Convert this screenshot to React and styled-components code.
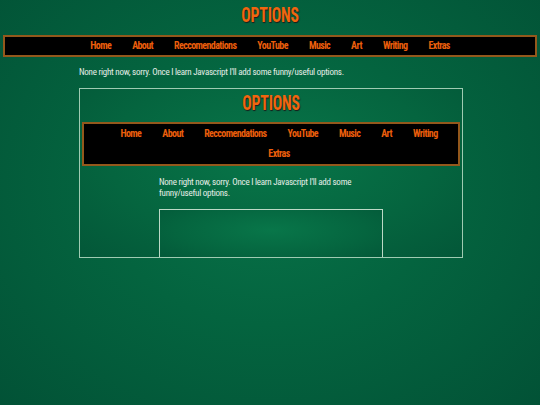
import React from "react";
import styled, { createGlobalStyle } from "styled-components";

const GlobalStyle = createGlobalStyle`
  html, body {
    margin: 0;
    padding: 0;
  }
  body {
    min-height: 100vh;
    background: radial-gradient(ellipse at 50% 45%, #087349 0%, #04643f 45%, #025236 100%);
    font-family: Roboto, "Open Sans", "DejaVu Sans Condensed", sans-serif;
    font-stretch: condensed;
    color: #e8efe9;
  }
`;

const links = ["Home", "About", "Reccomendations", "YouTube", "Music", "Art", "Writing", "Extras"];

const Wrapper = styled.div`
  display: flex;
  flex-direction: column;
  padding-top: ${(p) => (p.inner ? "3px" : "4px")};
`;

const Title = styled.h1`
  margin: 0;
  height: 22px;
  line-height: 22px;
  text-align: center;
  font-size: 21px;
  font-weight: bold;
  letter-spacing: -0.3px;
  color: #f0660f;
  text-shadow: 1px 1px 1px #1a1a1a;
  transform: scaleX(0.75);
`;

const Nav = styled.ul`
  list-style: none;
  margin: ${(p) => (p.inner ? "8px 2px 0" : "9px 3px 0")};
  padding: ${(p) => (p.inner ? "0 0 0 16px" : "0")};
  background: #000;
  border: 2px solid #93581c;
  display: flex;
  flex-wrap: wrap;
  justify-content: center;
  align-items: center;
  align-content: center;
`;

const NavItem = styled.li`
  padding: 0 10.5px;
  height: ${(p) => (p.inner ? "20px" : "18px")};
  line-height: ${(p) => (p.inner ? "20px" : "18px")};
  font-size: 10px;
  font-weight: bold;
  letter-spacing: -0.6px;
  color: #ec5f0c;
`;

const Content = styled.div`
  margin-left: 79px;
  width: ${(p) => (p.inner ? "224px" : "384px")};
  padding-top: ${(p) => (p.inner ? "11px" : "10px")};
`;

const Text = styled.p`
  margin: 0;
  font-size: 9px;
  line-height: 11px;
  letter-spacing: -0.25px;
  color: #e6eee8;
`;

const Frame = styled.div`
  margin-top: 10px;
  height: ${(p) => (p.inner ? "50px" : "168px")};
  border: 1px solid ${(p) => (p.inner ? "#bcd9c6" : "#9fcbb2")};
  border-bottom: ${(p) => (p.inner ? "none" : undefined)};
  overflow: hidden;
  background: radial-gradient(ellipse at 50% 40%, #087649 0%, #05653f 60%, #035738 100%);
`;

function Page({ inner, children }) {
  return (
    <Wrapper inner={inner}>
      <Title>OPTIONS</Title>
      <Nav inner={inner}>
        {links.map((l) => (
          <NavItem key={l} inner={inner}>
            {l}
          </NavItem>
        ))}
      </Nav>
      <Content inner={inner}>
        <Text>None right now, sorry. Once I learn Javascript I'll add some funny/useful options.</Text>
        <Frame inner={inner}>{children}</Frame>
      </Content>
    </Wrapper>
  );
}

export default function App() {
  return (
    <>
      <GlobalStyle />
      <Page>
        <Page inner />
      </Page>
    </>
  );
}
